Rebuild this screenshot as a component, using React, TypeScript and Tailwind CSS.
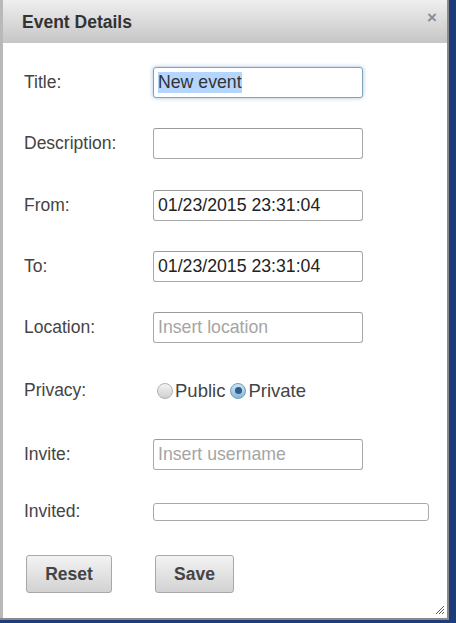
import React from 'react';

const Label = ({ children }: { children: React.ReactNode }) => (
    <div className="w-[129px] text-[17.5px] text-[#444]">{children}</div>
);

const TextBox = ({ value, placeholder, focused }: { value?: string; placeholder?: string; focused?: boolean }) => (
    <div
        className={
            'w-[210px] h-[31px] rounded-[3px] bg-white flex items-center px-[4px] text-[17.7px] ' +
            (focused
                ? 'border border-[#7fa3bd] shadow-[0_0_4px_rgba(100,150,200,0.6)]'
                : 'border border-[#a9a9a9] border-t-[#9a9a9a]')
        }
    >
        {value ? (
            focused ? (
                <span className="bg-[#b4d5fe] text-[#333] leading-[21px]">{value}</span>
            ) : (
                <span className="text-[#222]">{value}</span>
            )
        ) : (
            <span className="text-[#a5a5a5]">{placeholder}</span>
        )}
    </div>
);

const Radio = ({ checked }: { checked?: boolean }) => (
    <span
        className={
            'inline-flex items-center justify-center w-[16px] h-[16px] rounded-full border ' +
            (checked
                ? 'border-[#6f9bbd] bg-gradient-to-b from-[#cfe3f3] to-[#8ab6d8]'
                : 'border-[#b0b0b0] bg-gradient-to-b from-[#f4f4f4] to-[#cfcfcf]')
        }
    >
        {checked && <span className="w-[7px] h-[7px] rounded-full bg-[#2f5f86]" />}
    </span>
);

const Button = ({ label, width }: { label: string; width: string }) => (
    <button
        className={
            width +
            ' h-[38px] rounded-[3px] border border-[#a8a8a8] bg-gradient-to-b from-[#f3f3f3] to-[#d2d2d2] text-[17.5px] font-bold text-[#444]'
        }
    >
        {label}
    </button>
);

export default function App() {
    return (
        <div className="w-[456px] h-[623px] bg-[#1d3c7a] overflow-hidden" style={{ fontFamily: '"Liberation Sans", Arial, sans-serif' }}>
            <div className="w-[449px] h-[620px] bg-[#8a8a8a] pb-[2px] pr-[2px]">
                <div className="w-[447px] h-[618px] border-l-[3px] border-[#b9b9b9] bg-white flex flex-col relative">
                    {/* header */}
                    <div className="h-[43px] bg-gradient-to-b from-[#efefef] to-[#c6c6c6] flex items-center justify-between pl-[19px] pr-[10px] shrink-0">
                        <span className="text-[17.5px] font-bold text-[#333] mt-[1px]">Event Details</span>
                        <span className="text-[17px] font-bold text-[#8c8c8c] self-start mt-[5px]">×</span>
                    </div>

                    {/* form */}
                    <div className="flex flex-col pl-[21px]">
                        <div className="flex items-center h-[31px] mt-[24px]">
                            <Label>Title:</Label>
                            <TextBox value="New event" focused />
                        </div>
                        <div className="flex items-center h-[31px] mt-[30px]">
                            <Label>Description:</Label>
                            <TextBox />
                        </div>
                        <div className="flex items-center h-[31px] mt-[31px]">
                            <Label>From:</Label>
                            <TextBox value="01/23/2015 23:31:04" />
                        </div>
                        <div className="flex items-center h-[31px] mt-[30px]">
                            <Label>To:</Label>
                            <TextBox value="01/23/2015 23:31:04" />
                        </div>
                        <div className="flex items-center h-[31px] mt-[30px]">
                            <Label>Location:</Label>
                            <TextBox placeholder="Insert location" />
                        </div>
                        <div className="flex items-center h-[31px] mt-[32px]">
                            <Label>Privacy:</Label>
                            <div className="flex items-center text-[18.5px] text-[#444] ml-[4px]">
                                <Radio />
                                <span className="ml-[2px] mr-[5px]">Public</span>
                                <Radio checked />
                                <span className="ml-[2px]">Private</span>
                            </div>
                        </div>
                        <div className="flex items-center h-[31px] mt-[33px]">
                            <Label>Invite:</Label>
                            <TextBox placeholder="Insert username" />
                        </div>
                        <div className="flex items-center h-[31px] mt-[26px]">
                            <Label>Invited:</Label>
                            <div className="w-[276px] h-[18px] rounded-[3px] border border-[#a9a9a9] bg-white" />
                        </div>
                        <div className="flex items-center mt-[28px] pl-[2px]">
                            <Button label="Reset" width="w-[86px]" />
                            <Button label="Save" width="w-[79px] ml-[43px]" />
                        </div>
                    </div>

                    {/* resize grip */}
                    <svg className="absolute right-[3px] bottom-[4px]" width="8" height="8" viewBox="0 0 8 8">
                        <path d="M8 0 L0 8 M8 3 L3 8 M8 6 L6 8" stroke="#555" strokeWidth="1" />
                    </svg>
                </div>
            </div>
        </div>
    );
}
